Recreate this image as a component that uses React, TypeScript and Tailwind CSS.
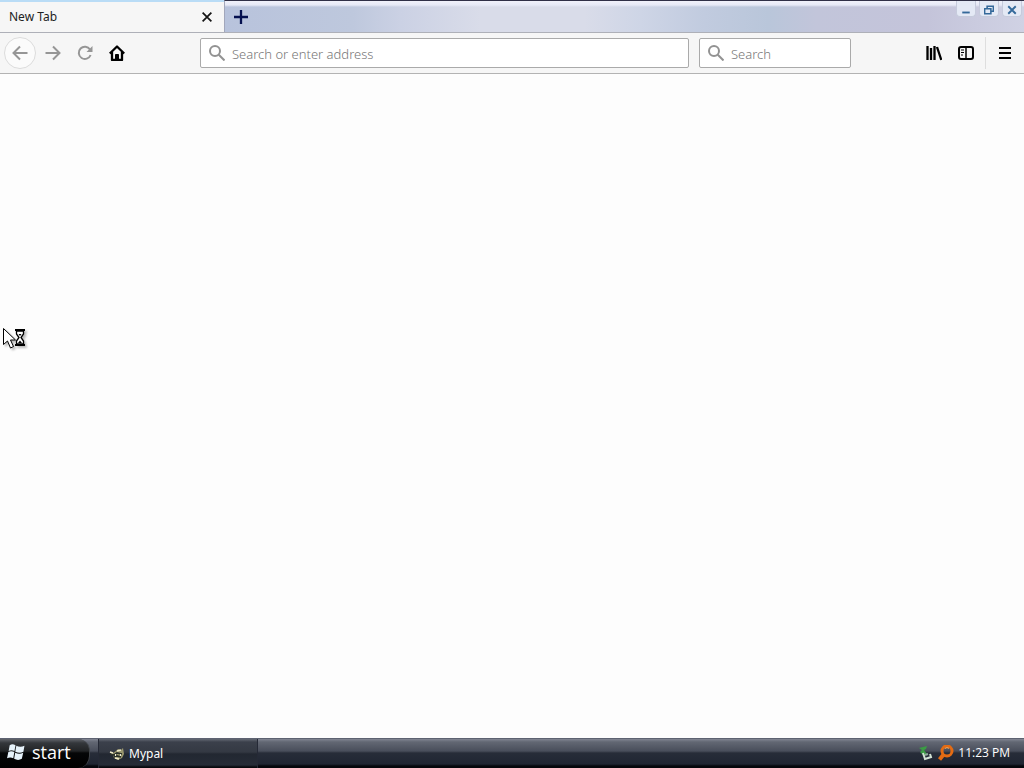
import type { ReactNode } from "react";

function Icon({ children, className = "size-4" }: { children: ReactNode; className?: string }) {
  return (
    <svg viewBox="0 0 16 16" fill="none" stroke="currentColor" strokeWidth="2" className={`shrink-0 ${className}`} aria-hidden="true">
      {children}
    </svg>
  );
}

function ToolButton({ label, className = "", children }: { label: string; className?: string; children: ReactNode }) {
  return (
    <button type="button" aria-label={label} className={`flex size-8 shrink-0 items-center justify-center ${className}`}>
      {children}
    </button>
  );
}

function WindowButton({ label, children }: { label: string; children: ReactNode }) {
  return (
    <button type="button" aria-label={label} className="flex h-4 w-5 items-center justify-center rounded-b-sm border border-t-0 border-[#c6cbdc] bg-[#e4e9f5] pt-[2px] text-[#34699a]">
      <Icon className="size-[10px]">{children}</Icon>
    </button>
  );
}

function SearchField({ label, className }: { label: string; className: string }) {
  return (
    <label className={`flex h-[30px] items-center gap-[7px] rounded-xs border border-[#aaa] bg-white pl-2 ${className}`}>
      <Icon className="size-4 text-[#929292]">
        <circle cx="6" cy="6" r="5" />
        <path d="M9.8 9.8L15.5 15.5" />
      </Icon>
      <input type="text" aria-label={label} placeholder={label} className="min-w-0 flex-1 bg-transparent pt-[2px] text-[13px] font-light leading-5 text-gray-700 outline-none placeholder:text-[#777]" />
    </label>
  );
}

function TabStrip() {
  return (
    <header className="flex h-8 items-stretch bg-[#bcc3dc]">
      <div className="flex w-56 shrink-0 items-center justify-between border-t-2 border-[#b9dcf6] bg-[#f6f6f6] pl-[9px] pr-[7px]">
        <span className="text-xs text-[#222]">New Tab</span>
        <button type="button" aria-label="Close tab" className="flex size-5 items-center justify-center text-[#151515]">
          <Icon className="size-[10px]"><path d="M1 1L15 15M15 1L1 15" strokeWidth="2.8" /></Icon>
        </button>
      </div>
      <div className="flex flex-1 items-start justify-between border-l border-t border-l-[#a2a7bb] border-t-[#303047] bg-[linear-gradient(#f0f1fa_0px,#e6e9f6_4px,transparent_6px),linear-gradient(90deg,#b8c3dc_0%,#bec8dd_16%,#cbd1e4_22%,#d9dce9_32%,#d9dce9_45%,#ced5e6_52%,#c1cbdf_60%,#b9c6da_68%,#c2c5da_74%,#c4c4da_88%,#d0d2e4_100%)]">
        <ToolButton label="New tab" className="text-[#05104f]">
          <Icon><path d="M8 1V15M1 8H15" strokeWidth="2.3" /></Icon>
        </ToolButton>
        <div className="flex gap-[3px] pr-[2px]">
          <WindowButton label="Minimize"><path d="M2 12H14" strokeWidth="3" /></WindowButton>
          <WindowButton label="Restore"><path d="M5 5V2H15V10H11M1 6H11V14H1Z" strokeWidth="2.5" /></WindowButton>
          <WindowButton label="Close"><path d="M2 2L14 14M14 2L2 14" strokeWidth="3" /></WindowButton>
        </div>
      </div>
    </header>
  );
}

function Toolbar() {
  return (
    <nav aria-label="Browser toolbar" className="flex h-[42px] items-center border-y border-t-[#aeb0b8] border-b-[#b3b3b3] bg-[#f6f6f6] pl-1 pr-[3px]">
      <div className="flex shrink-0 text-[#969696]">
        <ToolButton label="Back" className="rounded-full border border-[#dcdcdc] bg-[#fbfbfb]">
          <Icon><path d="M15.5 8H1.5M8 1.5L1.5 8L8 14.5" /></Icon>
        </ToolButton>
        <ToolButton label="Forward" className="ml-px">
          <Icon><path d="M0.5 8H14.5M8 1.5L14.5 8L8 14.5" /></Icon>
        </ToolButton>
        <ToolButton label="Reload">
          <Icon><path d="M13.6 10A6.1 6.1 0 1 1 13 4.5" /><path d="M15.5 1V7H9.5Z" fill="currentColor" stroke="none" /></Icon>
        </ToolButton>
        <ToolButton label="Home" className="text-black">
          <Icon><path d="M0.8 8.5L8 1.5L15.2 8.5M3 7V15H13V7" strokeLinejoin="round" strokeWidth="2.3" /><path d="M6.5 15V9.5H9.5V15Z" fill="currentColor" strokeWidth="1" /></Icon>
        </ToolButton>
      </div>
      <div className="ml-[67px] mr-[67px] flex flex-1 gap-[10px]">
        <SearchField label="Search or enter address" className="flex-1" />
        <SearchField label="Search" className="w-38" />
      </div>
      <div className="flex shrink-0 items-center text-black">
        <ToolButton label="Library">
          <Icon><path d="M1.5 1V15M5 3V15M8.5 1V15M11 2L15.3 15" strokeWidth="2.3" /></Icon>
        </ToolButton>
        <ToolButton label="Sidebars">
          <Icon><rect x="1" y="2" width="14" height="12" rx="2" /><path d="M8 2V14" strokeWidth="1.5" /><path d="M3 5H6M3 7.5H6M3 10H5" strokeWidth="1" /></Icon>
        </ToolButton>
        <span className="mx-[3px] h-8 w-px bg-[#dedede]" />
        <ToolButton label="Open menu">
          <Icon><path d="M2 3H14M2 8H14M2 13H14" /></Icon>
        </ToolButton>
      </div>
    </nav>
  );
}

function BusyPointer() {
  return (
    <svg viewBox="0 0 28 26" className="absolute left-[2px] top-[327px] h-[26px] w-7 drop-shadow-[2px_2px_1px_#bbb]" aria-hidden="true">
      <path d="M1.5 1.5V17.5L5.5 14L8.5 21L11.5 19.5L8.5 13H13.5Z" fill="white" stroke="black" />
      <path d="M13 3H23M13 18H23" stroke="black" strokeWidth="2" />
      <path d="M14.5 4V7L17 10.5L14.5 14V17H21.5V14L19 10.5L21.5 7V4Z" fill="white" stroke="black" strokeWidth="1.3" />
      <path d="M16.5 7H19.5L18 9ZM16 16L18 13.5L20 16Z" fill="black" />
    </svg>
  );
}

function Taskbar() {
  return (
    <footer className="flex h-[30px] items-stretch border-t border-[#5d6271] bg-[linear-gradient(#818592_0px,#626773_3px,#494e5b_12px,#272c38_14px,#202633_25px,#05070c_27px)] text-white">
      <button type="button" className="flex w-[90px] shrink-0 items-center gap-[7px] rounded-r-xl border-r border-[#404448] bg-[linear-gradient(#62656b_0px,#34373b_4px,#222426_12px,#050607_14px,#000_29px)] pb-1 pl-[6px] text-lg leading-6">
        <svg viewBox="0 0 18 16" className="h-[18px] w-[19px]" fill="#e7f3fb" aria-hidden="true">
          <path d="M3.5 1.5Q6 0 9 1.5L8 7Q5 5.5 2.5 7ZM9.8 2Q13.5 4 17.5 2L16.5 7.8Q13 9.5 8.8 7.8ZM2.2 7.9Q5 6.5 7.9 8L6.9 14Q4 12.5 1 14ZM8.7 8.7Q12.5 10.5 16.3 8.8L15 14.5Q11.5 16.5 7.7 14.5Z" />
        </svg>
        <span className="font-['Open_Sans','Noto_Sans',sans-serif]">start</span>
      </button>
      <button type="button" className="ml-2 flex w-40 items-center gap-1 border-x border-[#252936] bg-[linear-gradient(#646974_0px,#3b404b_3px,#343943_13px,#222731_15px,#262c37_26px,#080a0e_28px)] pl-[10px] text-xs">
        <svg viewBox="0 0 16 16" className="size-4" aria-hidden="true">
          <path d="M1 6L4 7L7 5L9 3L12 4L14 2L15 8L13 12L9 14L5 12L4 9Z" fill="#9a976e" />
          <path d="M1 8L5 9L8 7L13 8M5 11L8 10L12 11" stroke="#2a3029" strokeWidth="1.7" fill="none" />
          <path d="M1 6L4 7M8 5L12 4M6 12L10 13" stroke="#eee9c7" strokeWidth="1.5" />
          <path d="M6 9H7M11 9H12" stroke="#f4f2da" strokeWidth="2" />
        </svg>
        Mypal
      </button>
      <div className="ml-auto flex items-center gap-1 pb-px pr-[14px]">
        <svg viewBox="0 0 16 16" className="size-4" aria-hidden="true">
          <path d="M1 3L9 1L8 4L6 5L9 9L6 11L2 7L4 5Z" fill="#3b9c44" />
          <path d="M5 8L7 14L13 12L12 9" fill="none" stroke="#d1e1d3" strokeWidth="2" />
          <path d="M7 10L10 9" stroke="#8faa9a" strokeWidth="2" />
        </svg>
        <svg viewBox="0 0 16 16" className="size-4" fill="none" stroke="#e36b13" strokeWidth="3" aria-hidden="true">
          <circle cx="9" cy="6" r="5" /><path d="M6 9L1.5 14.5" strokeWidth="4" />
          <path d="M6.8 3.5Q9 1.8 11 3.3" stroke="#ffb15a" strokeWidth="1" />
        </svg>
        <time className="font-['Open_Sans','Noto_Sans',sans-serif] text-xs">11:23 PM</time>
      </div>
    </footer>
  );
}

export default function App() {
  return (
    <div className="relative flex min-h-screen flex-col bg-[#fdfdfd] font-['Noto_Sans','Open_Sans',sans-serif]">
      <TabStrip />
      <Toolbar />
      <main className="flex-1" aria-label="New Tab" />
      <Taskbar />
      <BusyPointer />
    </div>
  );
}
